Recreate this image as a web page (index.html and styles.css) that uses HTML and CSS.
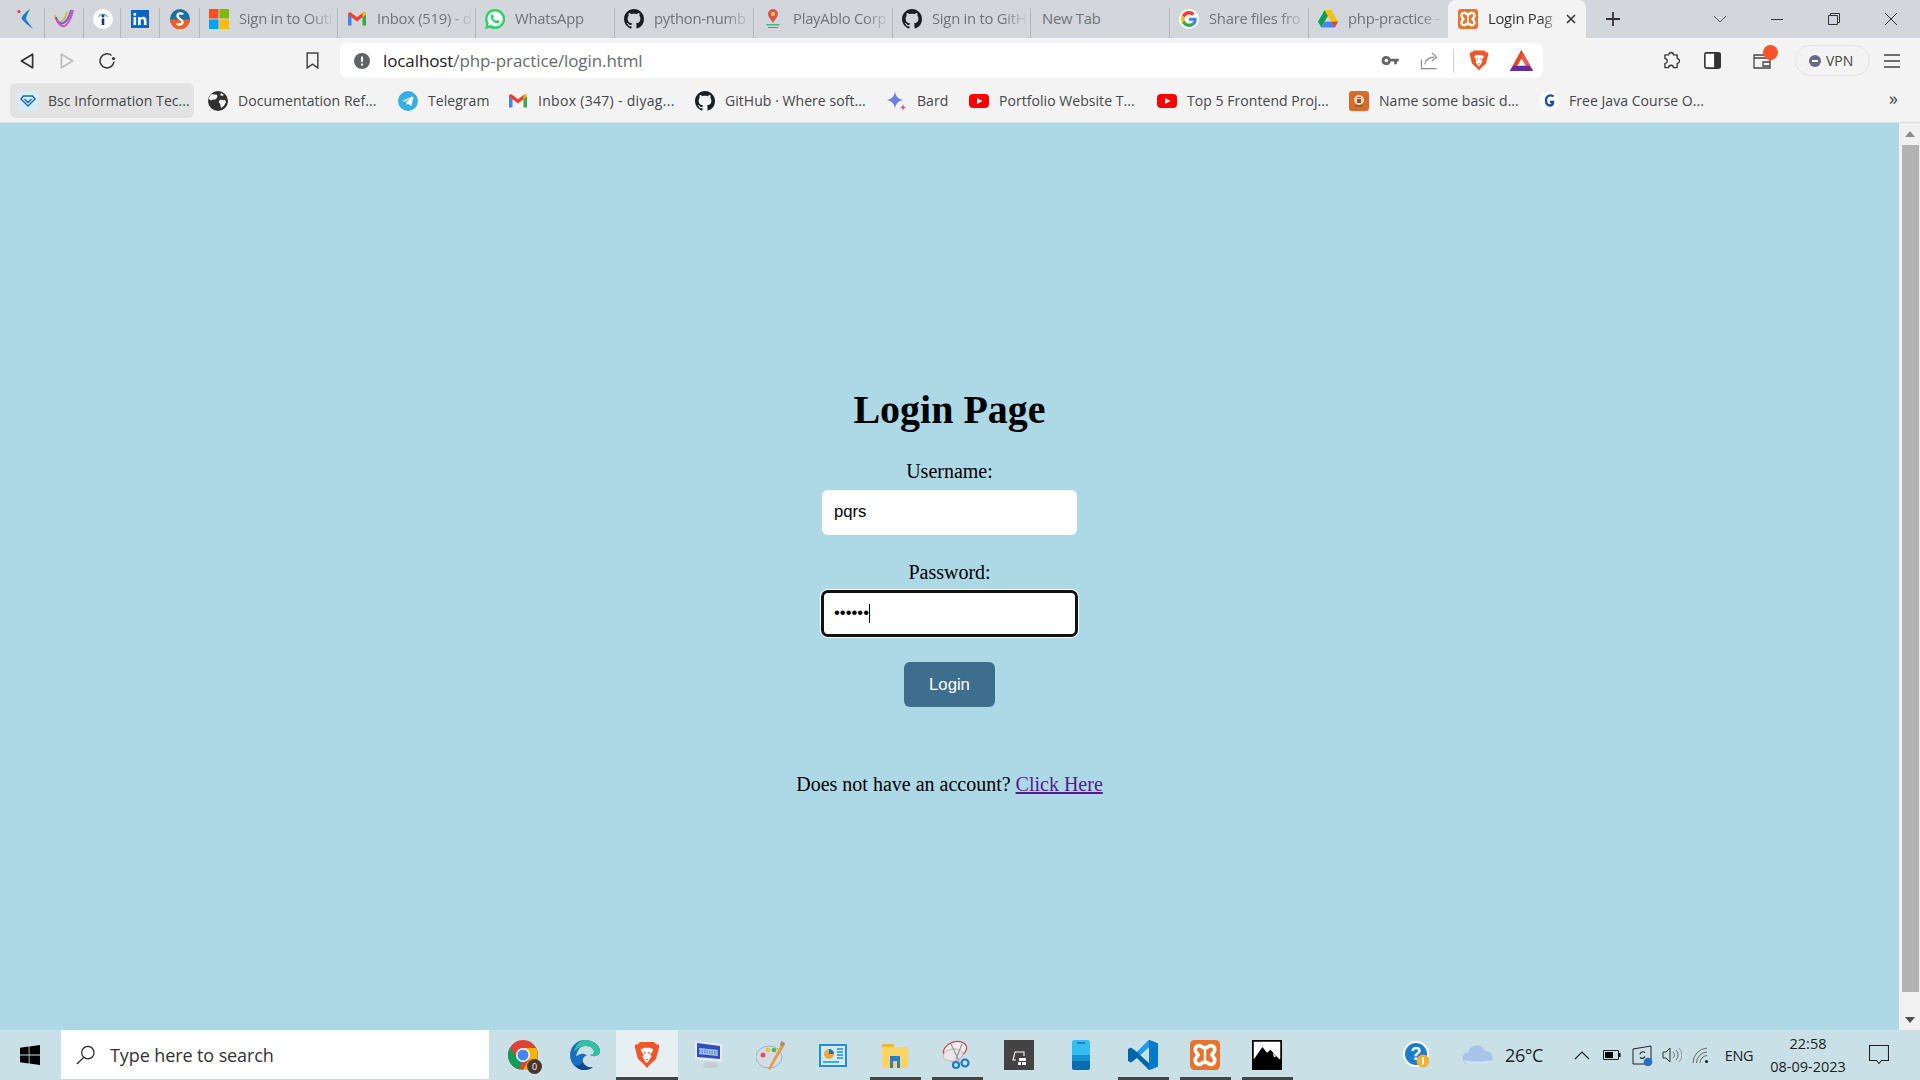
FILE: index.html
```html
<!DOCTYPE html>
<html lang="en">
<head>
  <meta charset="UTF-8">
  <title>Login Page</title>
  <meta name="viewport" content="width=device-width, initial-scale=1.0">
  <link rel="stylesheet" href="styles.css">
</head>
<body>

  <svg class="defs" width="0" height="0">
    <symbol id="gmail" viewBox="0 0 20 20">
      <path fill="#4285f4" d="M1 5v11.500h3.500V8z"/>
      <path fill="#34a853" d="M19 5v11.500h-3.500V8z"/>
      <path fill="#ea4335" d="M1 5.500C1 3.400 3 2.800 4.200 3.800L10 8.300l5.800-4.500C17 2.800 19 3.400 19 5.500L15.500 8.200 10 12.400 4.500 8.200z"/>
      <path fill="#fbbc04" d="M15.500 8.200V4.600l.3-.8C17 2.800 19 3.400 19 5.500z"/>
    </symbol>
    <symbol id="github" viewBox="0 0 16 16">
      <path fill="#1b1f23" d="M8 0C3.580 0 0 3.580 0 8c0 3.540 2.290 6.530 5.470 7.590.4.070.55-.17.55-.38 0-.19-.01-.82-.01-1.490-2.010.37-2.530-.49-2.690-.94-.09-.23-.48-.94-.82-1.130-.28-.15-.68-.52-.01-.53.63-.01 1.080.58 1.230.82.72 1.210 1.870.87 2.330.66.07-.52.28-.87.51-1.070-1.780-.2-3.640-.89-3.640-3.950 0-.87.31-1.590.82-2.150-.08-.2-.36-1.020.08-2.120 0 0 .67-.21 2.200.82.64-.18 1.320-.27 2-.27.68 0 1.360.09 2 .27 1.530-1.040 2.200-.82 2.200-.82.44 1.100.16 1.920.08 2.120.51.56.82 1.270.82 2.150 0 3.070-1.870 3.750-3.650 3.950.29.25.54.73.54 1.480 0 1.070-.01 1.930-.01 2.200 0 .21.15.46.55.38A8.013 8.013 0 0016 8c0-4.420-3.580-8-8-8z"/>
    </symbol>
    <symbol id="google" viewBox="0 0 48 48">
      <circle cx="24" cy="24" r="24" fill="#fff"/>
      <path fill="#ea4335" d="M24 13c3 0 5.600 1 7.700 3l5.700-5.700C33.900 7 29.400 5 24 5 16.600 5 10.200 9.200 7.100 15.400l6.700 5.200C15.300 16.100 19.300 13 24 13z"/>
      <path fill="#4285f4" d="M42.500 24.500c0-1.300-.1-2.600-.3-3.800H24v7.200h10.400c-.5 2.400-1.800 4.400-3.800 5.800l6.500 5c3.700-3.500 5.400-8.500 5.400-14.200z"/>
      <path fill="#fbbc05" d="M13.800 27.400c-.9-2.300-.9-4.500 0-6.800l-6.700-5.200c-2.800 5.700-2.800 11.500 0 17.200z"/>
      <path fill="#34a853" d="M24 43c5.400 0 9.700-1.700 13.100-5.300l-6.500-5c-1.700 1.200-3.900 2.300-6.600 2.300-4.700 0-8.700-3.100-10.200-7.600l-6.700 5.200C10.200 38.800 16.600 43 24 43z"/>
    </symbol>
    <symbol id="youtube" viewBox="0 0 20 20">
      <rect x="0" y="3" width="20" height="14" rx="4" fill="#f00"/>
      <path fill="#fff" d="M8 7l5.500 3L8 13z"/>
    </symbol>
    <symbol id="xampp" viewBox="0 0 20 20">
      <rect width="20" height="20" rx="3" fill="#e8732c"/>
      <path fill="none" stroke="#fff" stroke-width="2.400" d="M3.500 6.500C3.500 3.500 7 3 8.500 5h3C13 3 16.500 3.500 16.500 6.500c0 2-1.500 2.500-2 3.500.5 1 2 1.500 2 3.500 0 3-3.500 3.500-5 1.500h-3C7 17 3.500 16.500 3.500 13.500c0-2 1.500-2.500 2-3.500-.5-1-2-1.500-2-3.500z"/>
      <path stroke="#fff" stroke-width="1.600" d="M10 6v8"/>
    </symbol>
    <symbol id="brave" viewBox="0 0 20 22">
      <path fill="#f1562b" d="M4.500 1h11l1.500 1.800 2 .2.500 2-.7 2-1.800 7-4.500 4.200L10 21l-2.500-2.800L3 14 1.200 7 .5 5 1 3l2-.2z"/>
      <path fill="#fff" d="M5 6.500L8 5.500h4l3 1-1.200 2.500-1.300 1.500 1 1.500-1.500 2.300-1 1.700L10 17l-1-.5-1-1.700-1.500-2.300 1-1.500L6.200 9z"/>
      <path fill="#f1562b" d="M7.500 8.500l2 .8-1.200 1zM12.500 8.500l-2 .8 1.200 1zM8.800 14h2.400L10 15.200z"/>
    </symbol>
  </svg>

  <div class="tab-strip">
    <div class="tab pin-a">
      <svg class="ico" viewBox="0 0 20 20"><circle cx="4" cy="2.500" r="1.600" fill="#e8343c"/><path fill="#1f7fc4" d="M15 0C10 3.500 6.500 7 6.500 10 9 13 13 16 18 20 15 15 11.500 12 11 9.500 11.500 7 13 4 15 0z"/></svg>
    </div>
    <div class="tab pin-b">
      <svg class="ico" viewBox="0 0 20 20" fill="none" stroke-width="2"><path stroke="#e8b13c" d="M1 6c0 6 4 8 7 6 3-2 4-5 5-9"/><path stroke="#5c6bd6" d="M2 8c1 6 6 8 9 5 3-3 5-7 6-12"/><path stroke="#e04dbd" d="M3 11c2 6 7 8 10 4 3-4 5-9 6-14"/></svg>
    </div>
    <div class="tab pin-c">
      <svg class="ico" viewBox="0 0 20 20"><circle cx="10" cy="10" r="10" fill="#fff"/><circle cx="10" cy="7" r="1.500" fill="#143a78"/><path fill="#143a78" d="M8.700 9.500h2.600V16H8.700z"/><path fill="none" stroke="#2d7fd3" stroke-width="1" d="M5.500 8a5 5 0 019 0"/></svg>
    </div>
    <div class="tab pin-d">
      <svg class="ico" viewBox="0 0 20 20"><rect x="1" y="1" width="18" height="18" fill="#0a66c2"/><path fill="#fff" d="M3.500 8h2.600v8H3.500zM4.800 3.800a1.500 1.500 0 110 3 1.500 1.500 0 010-3zM8 8h2.500v1.200C11 8.400 12 7.800 13.200 7.800c2.500 0 3.300 1.500 3.300 3.800V16h-2.600v-4c0-1-.3-1.900-1.400-1.900s-1.800.8-1.800 2V16H8z"/></svg>
    </div>
    <div class="tab pin-e">
      <svg class="ico" viewBox="0 0 20 20"><circle cx="10" cy="10" r="10" fill="#1d6fa5"/><path fill="#e8632c" d="M0 10.500h20a10 10 0 01-20 0z"/><path fill="none" stroke="#fff" stroke-width="2.400" d="M13 5.500C12 3.800 7.500 3.800 7.500 7c0 3 5 3 5 6 0 3.200-4.500 3-5.500 1.300"/></svg>
    </div>

    <div class="tab wide-a">
      <svg class="ico" viewBox="0 0 20 20"><path fill="#f25022" d="M0 0h9.500v9.500H0z"/><path fill="#7fba00" d="M10.500 0H20v9.500h-9.500z"/><path fill="#00a4ef" d="M0 10.500h9.500V20H0z"/><path fill="#ffb900" d="M10.500 10.500H20V20h-9.500z"/></svg>
      <span class="tab-text">Sign in to Outl</span>
    </div>
    <div class="tab wide-a">
      <svg class="ico"><use href="#gmail"/></svg>
      <span class="tab-text">Inbox (519) - d</span>
    </div>
    <div class="tab wide-b">
      <svg class="ico" viewBox="0 0 20 20"><path fill="#25d366" d="M10 0a10 10 0 00-8.600 15L0 20l5.200-1.300A10 10 0 1010 0z"/><path fill="#fff" d="M10 2.500a7.500 7.500 0 00-6.300 11.500L3 16.800l2.900-.7A7.500 7.500 0 1010 2.500z"/><path fill="#25d366" d="M7 5.500c-.8.400-1.500 1.500-1.300 2.800.4 2.800 3.200 5.500 5.800 6 1.300.2 2.500-.5 2.900-1.400.2-.5.100-.9-.2-1.100l-1.700-.9c-.3-.1-.6 0-.8.300l-.6.700c-1.300-.4-2.600-1.700-3.100-3l.6-.7c.2-.2.200-.5.100-.8l-.7-1.700c-.2-.4-.6-.4-1-.2z"/></svg>
      <span class="tab-text">WhatsApp</span>
    </div>
    <div class="tab wide-b">
      <svg class="ico"><use href="#github"/></svg>
      <span class="tab-text">python-numb</span>
    </div>
    <div class="tab wide-b">
      <svg class="ico" viewBox="0 0 20 20"><path fill="#d9574a" d="M10 0a5 5 0 00-5 5c0 3 3 5.500 5 9 2-3.500 5-6 5-9a5 5 0 00-5-5z"/><circle cx="10" cy="5" r="2" fill="#e8d44c"/><path fill="#49b38a" d="M3 15h14l-1 1.500H4z"/><path fill="#d84d8a" d="M5 18h10v1H5z"/></svg>
      <span class="tab-text">PlayAblo Corp</span>
    </div>
    <div class="tab wide-a">
      <svg class="ico"><use href="#github"/></svg>
      <span class="tab-text">Sign in to GitH</span>
    </div>
    <div class="tab wide-b plain">
      <span class="tab-text">New Tab</span>
    </div>
    <div class="tab wide-b">
      <svg class="ico"><use href="#google"/></svg>
      <span class="tab-text">Share files fro</span>
    </div>
    <div class="tab wide-b no-line">
      <svg class="ico" viewBox="0 0 20 18"><path fill="#0f9d58" d="M6.700 0L0 11.700 3.300 17.500 10 5.800z"/><path fill="#ffc107" d="M6.700 0h6.600L20 11.700h-6.700z"/><path fill="#4285f4" d="M3.300 17.500L6.700 11.700H20l-3.300 5.800z"/><path fill="#ea4335" d="M13.300 11.700L16.700 17.500 20 11.700z"/></svg>
      <span class="tab-text">php-practice -</span>
    </div>
    <div class="tab active">
      <svg class="ico"><use href="#xampp"/></svg>
      <span class="tab-text">Login Pag</span>
      <svg class="tab-close" viewBox="0 0 10 10"><path d="M1 1l8 8M9 1l-8 8" stroke="#333" stroke-width="1.600"/></svg>
    </div>
    <svg class="new-tab" viewBox="0 0 14 14"><path d="M7 0v14M0 7h14" stroke="#333" stroke-width="1.800"/></svg>

    <div class="window-btns">
      <svg class="win-btn" viewBox="0 0 14 14" fill="none" stroke="#555"><path d="M1 4l6 6 6-6"/></svg>
      <svg class="win-btn" viewBox="0 0 14 14" fill="none" stroke="#333"><path d="M1 7.500h12"/></svg>
      <svg class="win-btn" viewBox="0 0 14 14" fill="none" stroke="#333"><path d="M1.500 3.500h9v9h-9zM3.500 3.500v-2h9v9h-2"/></svg>
      <svg class="win-btn" viewBox="0 0 14 14" fill="none" stroke="#333"><path d="M1 1l12 12M13 1L1 13"/></svg>
    </div>
  </div>

  <div class="toolbar">
    <div class="nav-btns">
      <svg class="nav-ico" viewBox="0 0 14 16" fill="none" stroke="#333" stroke-width="1.500"><path d="M12 2v12L2 8z" stroke-linejoin="round"/></svg>
      <svg class="nav-ico" viewBox="0 0 14 16" fill="none" stroke="#bcbcbc" stroke-width="1.500"><path d="M2 2v12l10-6z" stroke-linejoin="round"/></svg>
      <svg class="nav-ico reload" viewBox="0 0 18 18" fill="none" stroke="#333" stroke-width="1.500"><path d="M13.500 3.500A7 7 0 1016 9.500"/><circle cx="15.500" cy="6.500" r="1.600" fill="#333" stroke="none"/></svg>
    </div>
    <svg class="bookmark-ico" viewBox="0 0 12 16" fill="none" stroke="#444" stroke-width="1.400"><path d="M1 1h10v14l-5-3.500L1 15z"/></svg>
    <div class="omnibox">
      <svg class="info-ico" viewBox="0 0 16 16"><circle cx="8" cy="8" r="8" fill="#5f6368"/><path d="M7 3.500h2V9H7zM7 10.500h2v2H7z" fill="#fff"/></svg>
      <span class="url">localhost<span class="url-path">/php-practice/login.html</span></span>
      <div class="omni-icons">
        <svg class="key" viewBox="0 0 20 12"><path fill="#666" d="M5.500 1a5 5 0 014.700 3H19v3h-2v3h-3V7h-3.800A5 5 0 115.500 1zm0 3a2 2 0 100 4 2 2 0 000-4z"/></svg>
        <svg class="share" viewBox="0 0 20 20" fill="none" stroke="#8a8a8a" stroke-width="1.200"><path d="M1.500 9v9.500h16M5 14c1-5 5-7.500 10-7.500M12.500 2l5 4.500-5 4"/></svg>
        <span class="omni-line"></span>
        <svg class="brave-ico"><use href="#brave"/></svg>
        <svg class="bat" viewBox="0 0 22 20"><path fill="#662d91" d="M11 0L0 20h22z"/><path fill="#f15a4a" d="M11 0l11 20h-6L11 10z"/><path fill="#ff5000" d="M11 0L0 20h6l5-10z" opacity=".85"/><path fill="#fff" d="M11 8l-4.500 8h9z"/><path fill="#662d91" d="M0 20l3-5h16l3 5z"/></svg>
      </div>
    </div>
    <div class="tool-right">
      <svg class="puzzle" viewBox="0 0 18 20" fill="none" stroke="#333" stroke-width="1.400"><path d="M6 4a2.500 2.500 0 015 0h4v4a2.500 2.500 0 010 5v4.500h-4a2.500 2.500 0 00-5 0H2V13a2.500 2.500 0 000-5V4z" stroke-linejoin="round"/></svg>
      <svg class="sidebar-ico" viewBox="0 0 16 16"><rect x=".8" y=".8" width="14.400" height="14.400" rx="1.500" fill="#fff" stroke="#333" stroke-width="1.500"/><path fill="#333" d="M9.500 1h6v14h-6z"/></svg>
      <div class="wallet">
        <svg class="wallet-ico" viewBox="0 0 18 16" fill="none" stroke="#444" stroke-width="1.300"><path d="M1 2h16v13H1zM1 5h16M10 9h7v4h-7z"/></svg>
        <span class="red-dot"></span>
      </div>
      <div class="vpn"><span class="vpn-dot"></span>VPN</div>
      <svg class="menu-ico" viewBox="0 0 18 14" stroke="#444" stroke-width="1.500"><path d="M1 1h16M1 7h16M1 13h16"/></svg>
    </div>
  </div>

  <div class="bookmarks">
    <div class="bm hovered">
      <svg class="bm-ico" viewBox="0 0 20 20"><rect width="20" height="20" rx="2" fill="#d6ecf8"/><path fill="none" stroke="#1667b7" stroke-width="1.400" d="M3 8l2.500-3h9L17 8l-7 7zM6.500 8L10 11.500 13.500 8"/></svg>
      <span>Bsc Information Tec...</span>
    </div>
    <div class="bm">
      <svg class="bm-ico" viewBox="0 0 20 20"><circle cx="10" cy="10" r="10" fill="#303030"/><path fill="#f3f3f3" d="M4 3c2 1 4 0 5 1s0 3-1 4-3 0-4 1-2 0-3-1c0-2 1-4 3-5zM12 9c2-.5 3 .5 5 0l1 2c-1 3-3 5-5 6-1-1 0-3-1-4s-2-3 0-4zM13 2l3 2-2 1-2-1z"/></svg>
      <span>Documentation Ref...</span>
    </div>
    <div class="bm">
      <svg class="bm-ico" viewBox="0 0 20 20"><circle cx="10" cy="10" r="10" fill="#37aee2"/><path fill="#fff" d="M4 10l10.500-4.500c.6-.2 1 .1.900.8l-1.700 8c-.1.600-.6.700-1 .4l-2.700-2-1.400 1.300-.3-2.800 5-4.500-6.200 3.800z"/></svg>
      <span>Telegram</span>
    </div>
    <div class="bm inbox">
      <svg class="bm-ico"><use href="#gmail"/></svg>
      <span>Inbox (347) - diyag...</span>
    </div>
    <div class="bm">
      <svg class="bm-ico"><use href="#github"/></svg>
      <span>GitHub · Where soft...</span>
    </div>
    <div class="bm">
      <svg class="bm-ico" viewBox="0 0 20 20"><path fill="#6d7ee0" d="M8 0c.5 5 3 8 8 9-5 1-7.500 4-8 9-.5-5-3-8-8-9 5-1 7.500-4 8-9z"/><path fill="#d96570" d="M16 13c.3 2 1 3 3 3.500-2 .5-2.700 1.500-3 3.500-.3-2-1-3-3-3.500 2-.5 2.700-1.500 3-3.500z"/></svg>
      <span>Bard</span>
    </div>
    <div class="bm">
      <svg class="bm-ico"><use href="#youtube"/></svg>
      <span>Portfolio Website T...</span>
    </div>
    <div class="bm">
      <svg class="bm-ico"><use href="#youtube"/></svg>
      <span>Top 5 Frontend Proj...</span>
    </div>
    <div class="bm">
      <svg class="bm-ico" viewBox="0 0 20 20"><rect width="20" height="20" rx="3" fill="#d96b28"/><circle cx="10" cy="9" r="5" fill="#f0d9c0"/><path fill="#8a5a30" d="M8 6h4v1H8zM8 8h4v4H8zM6 14h8v1.500H6z"/></svg>
      <span>Name some basic d...</span>
    </div>
    <div class="bm">
      <svg class="bm-ico" viewBox="0 0 20 20"><circle cx="10" cy="10" r="10" fill="#fff"/><path fill="none" stroke="#1c4fa1" stroke-width="2.400" d="M14.500 5.500C13 4 9 3.500 7.500 7c-1.500 3 0 7.500 3.500 7.500 2 0 3-1.500 3-3.500h-3"/></svg>
      <span>Free Java Course O...</span>
    </div>
    <span class="bm-more">»</span>
  </div>

  <div class="viewport">
    <main class="page">
      <h1>Login Page</h1>
      <form class="login-form">
        <label class="field-label" for="username">Username:</label>
        <input class="field" type="text" id="username" value="pqrs">
        <label class="field-label second" for="password">Password:</label>
        <div class="field-wrap">
          <input class="field focused" type="password" id="password" value="pqrs12">
          <span class="caret"></span>
        </div>
        <button class="login-btn" type="button">Login</button>
      </form>
      <p class="signup">Does not have an account? <a href="#">Click Here</a></p>
    </main>
    <div class="scrollbar">
      <span class="arrow-up"></span>
      <div class="thumb"></div>
      <span class="arrow-down"></span>
    </div>
  </div>

  <div class="taskbar">
    <svg class="start" viewBox="0 0 20 20"><path fill="#000" d="M0 2.800l8.700-1.200v8H0zM9.500 1.500L20 0v9.600H9.500zM0 10.400h8.700v8L0 17.200zM9.500 10.400H20V20L9.500 18.500z"/></svg>
    <div class="search">
      <svg class="search-ico" viewBox="0 0 20 20" fill="none" stroke="#222" stroke-width="1.300"><circle cx="12.500" cy="7.500" r="6.500"/><path d="M8 12.500L1 19.500"/></svg>
      <span>Type here to search</span>
    </div>
    <div class="apps">
      <div class="app">
        <div class="chrome">
          <svg class="app-ico" viewBox="0 0 30 30"><circle cx="15" cy="15" r="15" fill="#db4437"/><path fill="#0f9d58" d="M2 7.500l7.500 11.500h5.500l-3.500 10.600A15 15 0 012 7.500z"/><path fill="#f4b400" d="M15 8h13a15 15 0 01-13 22l6.500-11z"/><circle cx="15" cy="15" r="7" fill="#fff"/><circle cx="15" cy="15" r="5.500" fill="#4285f4"/></svg>
          <span class="badge">0</span>
        </div>
      </div>
      <div class="app">
        <svg class="app-ico" viewBox="0 0 30 30"><path fill="#1a6fbf" d="M15 0a15 15 0 00-15 15c0 8 6 15 14 15 4 0 7-1 9-3-4 1-9-1-10-5-.8-3 1-6 4-6.500-3-3-8-2-11 1C8 8 11 6 16 6c5 0 8 3 8 6 0 2-2 3-4 2.500 2 3 10 2 10-3.500C30 5 23 0 15 0z"/><path fill="#35c1a0" d="M15 0C23 0 30 5 30 11c0 5.500-8 6.500-10 3.500 2 .5 4-.5 4-2.500 0-3-3-6-8-6-5 0-8 2-12 5.500C6 4 10 0 15 0z"/><path fill="#0c4a8a" d="M13 22c1 4 6 6 10 5-2 2-5 3-9 3-4 0-7-2-9-5 3 1 6 0 8-3z"/></svg>
      </div>
      <div class="app current">
        <svg class="app-ico brave-big"><use href="#brave"/></svg>
      </div>
      <div class="app">
        <svg class="app-ico" viewBox="0 0 30 30"><path fill="#c9ccd1" d="M11 22h11l3 4c-2 3-14 3-16 0z"/><path fill="#e8eaee" d="M1 1l27 3v18L1 19z"/><path fill="#2f4fc0" d="M3 3l23 3v13L3 17z"/><path fill="#a7c8ee" d="M5 8l19 2v6L5 14z"/><path stroke="#2f4fc0" stroke-width=".8" stroke-dasharray="1.500 1" d="M5 10l19 2M5 12l19 2"/></svg>
      </div>
      <div class="app">
        <svg class="app-ico" viewBox="0 0 30 30"><ellipse cx="13" cy="17" rx="13" ry="11" fill="#d3dde6" stroke="#9fb3c4"/><circle cx="7" cy="15" r="2.500" fill="#d85656"/><circle cx="12" cy="10" r="2.300" fill="#e9c23c"/><circle cx="18" cy="10" r="2.300" fill="#59b354"/><path fill="#e69a3a" d="M26 3l3 1.500L14 30l-2-1z"/><path fill="#b38a5a" d="M25 1l4 2-2 4-3-2z"/></svg>
      </div>
      <div class="app">
        <svg class="app-ico" viewBox="0 0 30 30"><rect x="1" y="4" width="28" height="23" fill="#1f8fd8"/><rect x="3" y="6" width="24" height="19" fill="#cfeaf8"/><circle cx="11" cy="14" r="5" fill="#f0a830"/><path fill="#1f6ec0" d="M11 14V9a5 5 0 015 5z"/><path stroke="#1f8fd8" stroke-width="1.500" d="M19 9h6M19 12h6M19 15h6M19 18h6M5 22h16"/></svg>
      </div>
      <div class="app running">
        <svg class="app-ico" viewBox="0 0 30 30"><path fill="#e8b93c" d="M2 4h12v4H2z"/><path fill="#fbd564" d="M2 7h26v21H2z"/><path fill="#2a7fc4" d="M10 16h10v12h-3v-7h-4v7h-3z"/></svg>
      </div>
      <div class="app running">
        <svg class="app-ico" viewBox="0 0 30 30" fill="none"><ellipse cx="13" cy="10" rx="12" ry="8" transform="rotate(-20 13 10)" fill="#f3f3f3" stroke="#d9474c" stroke-width="1.300"/><ellipse cx="11" cy="15" rx="10" ry="6" transform="rotate(-10 11 15)" fill="#e8e6ea" stroke="#c4b4bc"/><path stroke="#9b9b9b" stroke-width="1.300" d="M9 4l8 17M20 4l-6 15"/><circle cx="14" cy="25" r="3" stroke="#1f7ac4" stroke-width="2.200"/><circle cx="23" cy="23" r="3.500" stroke="#1f7ac4" stroke-width="2.200"/></svg>
      </div>
      <div class="app">
        <svg class="app-ico" viewBox="0 0 30 30"><rect width="30" height="30" fill="#444242"/><path fill="none" stroke="#fff" stroke-width="1.100" d="M12 20h-3l2-8h9v4"/><path fill="#fff" d="M15 18h7v3h-7zM14 22h3v3h-3zM18 22h4v3h-4z"/></svg>
      </div>
      <div class="app">
        <svg class="app-ico" viewBox="0 0 30 30"><rect x="6" width="18" height="30" rx="2.500" fill="#33bdf2"/><path fill="#1392d3" d="M6 15h18v6H6z"/><path fill="#0a6cb0" d="M6 21h18v6.500a2.500 2.500 0 01-2.500 2.500h-13A2.500 2.500 0 016 27.500z"/><path fill="#0d4f85" d="M11 2.500h8v1h-8z"/></svg>
      </div>
      <div class="app running">
        <svg class="app-ico" viewBox="0 0 30 30"><path fill="#0065a9" d="M21 0L9 12 3 7.500 0 9v12l3 1.500L9 18l12 12 9-3.500v-23z"/><path fill="#007acc" d="M21 0l9 3.500v23L21 30z"/><path fill="#c9e0e7" d="M21 7v16l-9-8z"/><path fill="#1f9cf0" d="M21 0L9 12l3 3 9-8z"/></svg>
      </div>
      <div class="app running">
        <svg class="app-ico"><use href="#xampp"/></svg>
      </div>
      <div class="app running">
        <svg class="app-ico" viewBox="0 0 26 26"><rect width="26" height="26" fill="#000"/><rect x="1.500" y="1.500" width="23" height="15" fill="#fff"/><path fill="#000" d="M1.500 17L9 6l4 5 3-2.500 8.500 9V22h-23z"/><path fill="#fff" d="M18 11l3 3-2 1z"/></svg>
      </div>
    </div>
    <div class="tray">
      <div class="tray-help">
        <svg viewBox="0 0 26 28" width="26" height="28"><circle cx="13" cy="13" r="13" fill="#fff"/><circle cx="13" cy="13" r="11" fill="#1d7dc8"/><text x="13" y="19" class="help-q">?</text><circle cx="20" cy="20" r="6.500" fill="#f2b134"/><path fill="#fff" d="M19 16.500h2v7h-2z"/></svg>
      </div>
      <svg class="cloud" viewBox="0 0 32 20"><path fill="#a9c4ea" d="M7 19a6 6 0 01-1-12 9 9 0 0117-1 6.500 6.500 0 012 13z"/><path fill="#d0e1f4" d="M2 15c7 2 20 2 29 0a6.500 6.500 0 01-6 4H7a6 6 0 01-5-4z"/></svg>
      <span class="temp">26°C</span>
      <div class="tray-cell first">
        <svg width="16" height="10" viewBox="0 0 16 10" fill="none" stroke="#222" stroke-width="1.200"><path d="M1 9l7-7 7 7"/></svg>
      </div>
      <div class="tray-cell">
        <svg width="18" height="12" viewBox="0 0 18 12"><path fill="none" stroke="#222" d="M.5 1.500h15v9H.5z"/><path fill="#000" d="M2 3h8v6H2zM16 4h1.500v4H16z"/></svg>
      </div>
      <div class="tray-cell">
        <svg width="21" height="21" viewBox="0 0 21 21" fill="none"><path stroke="#222" d="M1 4l18-3v18H1z"/><path stroke="#222" stroke-width="1.200" d="M13 7.500c-2-1.500-5-.5-5 2M8 12.500c1.500 1.500 4 1 5-1"/><circle cx="16" cy="17" r="4.300" fill="#2a6fc4"/></svg>
      </div>
      <div class="tray-cell">
        <svg width="20" height="18" viewBox="0 0 20 18" fill="none" stroke="#333"><path d="M1 6h3l4-4v14l-4-4H1z"/><path stroke="#555" d="M11 6a4 4 0 010 6M14 4a7 7 0 010 10" opacity=".8"/><path stroke="#999" d="M17 2a10 10 0 010 14"/></svg>
      </div>
      <div class="tray-cell wifi">
        <svg width="18" height="18" viewBox="0 0 18 18" fill="none" stroke="#666"><path d="M1 17A15 15 0 0115 2M4.500 17A11 11 0 0115 6M8 17a7.500 7.500 0 017-7.500"/><circle cx="14.500" cy="15.500" r="1.600" fill="#222" stroke="none"/></svg>
      </div>
      <div class="tray-cell eng">ENG</div>
      <div class="tray-cell clock"><span>22:58</span><span>08-09-2023</span></div>
      <div class="tray-cell notif">
        <svg width="20" height="20" viewBox="0 0 20 20" fill="none" stroke="#222" stroke-width="1.100"><path d="M.5.500h19v15h-7L10 18.500 7.500 15.500h-7z"/></svg>
      </div>
    </div>
  </div>

</body>
</html>
```

FILE: styles.css
```css
* {
  box-sizing: border-box;
}

html, body {
  margin: 0;
  height: 100%;
  overflow: hidden;
}

body {
  display: flex;
  flex-direction: column;
  width: 1920px;
  height: 1080px;
  font-family: "Open Sans", "Noto Sans", sans-serif;
  background: #add8e6;
}

.defs {
  display: block;
  height: 0;
}

svg {
  display: block;
  flex: none;
}

/* tabs */
.tab-strip {
  display: flex;
  height: 38px;
  background: #d3d6da;
}

.tab {
  display: flex;
  align-items: center;
  height: 30px;
  margin-top: 8px;
  padding: 0 0 8px 9px;
  border-right: 1px solid #b4b7bb;
  font-size: 14.8px;
  color: #717376;
  overflow: hidden;
  white-space: nowrap;
}

.ico {
  width: 20px;
  height: 20px;
}

.pin-a { width: 45px; padding-left: 15px; }
.pin-b { width: 39px; padding-left: 9px; }
.pin-c { width: 37px; padding-left: 9px; }
.pin-d { width: 39px; padding-left: 9px; }
.pin-e { width: 40px; padding-left: 10px; }
.wide-a { width: 138px; }
.wide-b { width: 139px; }
.plain { padding-left: 11px; }
.no-line { border-right: none; }

.tab-text {
  display: block;
  flex: 1;
  min-width: 0;
  margin-left: 10px;
  padding-bottom: 2px;
  letter-spacing: -0.25px;
  -webkit-mask-image: linear-gradient(to right, #000 72%, transparent 98%);
  mask-image: linear-gradient(to right, #000 72%, transparent 98%);
}

.plain .tab-text {
  margin-left: 0;
  -webkit-mask-image: none;
  mask-image: none;
}

.active {
  width: 138px;
  height: 38px;
  margin-top: 0;
  padding: 0 10px;
  border: none;
  border-radius: 8px 8px 0 0;
  background: #f3f3f3;
  color: #333;
}

.tab-close {
  width: 10px;
  height: 10px;
  margin-left: 4px;
}

.new-tab {
  width: 14px;
  height: 14px;
  margin: 12px 0 0 20px;
}

.window-btns {
  display: flex;
  margin-left: auto;
  padding: 0 22px 0 91px;
  gap: 43px;
  align-items: center;
}

.win-btn {
  width: 14px;
  height: 14px;
}

/* address bar */
.toolbar {
  display: flex;
  align-items: center;
  height: 45px;
  background: #f3f3f3;
}

.nav-btns {
  display: flex;
  align-items: center;
  gap: 24px;
  padding-left: 19px;
}

.nav-ico {
  width: 16px;
  height: 18px;
}

.reload {
  width: 18px;
  margin-left: -1px;
}

.bookmark-ico {
  width: 13px;
  height: 17px;
  margin-left: 190px;
}

.omnibox {
  display: flex;
  align-items: center;
  width: 1203px;
  height: 35px;
  margin-left: 21px;
  padding: 0 10px 0 14px;
  border-radius: 8px;
  background: #fff;
}

.info-ico {
  width: 16px;
  height: 16px;
}

.url {
  margin-left: 13px;
  font-size: 17px;
  letter-spacing: -0.1px;
  color: #222;
}

.url-path {
  color: #686b6f;
}

.omni-icons {
  display: flex;
  align-items: center;
  margin-left: auto;
}

.key {
  width: 19px;
  height: 11px;
}

.share {
  width: 19px;
  height: 19px;
  margin-left: 20px;
}

.omni-line {
  width: 1px;
  height: 24px;
  margin-left: 14px;
  background: #cfcfcf;
}

.brave-ico {
  width: 20px;
  height: 23px;
  margin-left: 15px;
}

.bat {
  width: 23px;
  height: 21px;
  margin-left: 21px;
}

.tool-right {
  display: flex;
  align-items: center;
  padding-left: 120px;
}

.puzzle {
  width: 17px;
  height: 19px;
}

.sidebar-ico {
  width: 17px;
  height: 17px;
  margin-left: 24px;
}

.wallet {
  position: relative;
  margin-left: 32px;
}

.wallet-ico {
  width: 18px;
  height: 16px;
}

.red-dot {
  position: absolute;
  top: -8px;
  left: 10px;
  width: 15px;
  height: 15px;
  border-radius: 50%;
  background: #fb542b;
}

.vpn {
  display: flex;
  align-items: center;
  gap: 5px;
  width: 75px;
  height: 31px;
  margin-left: 24px;
  padding-left: 13px;
  border: 1px solid #e3e3e3;
  border-radius: 16px;
  font-size: 14px;
  color: #444;
}

.vpn-dot {
  width: 12px;
  height: 12px;
  border-radius: 50%;
  background: linear-gradient(#fff, #fff) center / 6px 2px no-repeat #666a85;
}

.menu-ico {
  width: 18px;
  height: 14px;
  margin-left: 13px;
}

/* bookmarks */
.bookmarks {
  display: grid;
  grid-template-columns: 184px 184px 104px 181px 186px 76px 182px 186px 184px 178px;
  column-gap: 6px;
  align-items: center;
  position: relative;
  height: 40px;
  padding: 0 0 5px 10px;
  background: #f3f3f3;
  border-bottom: 1px solid #d8dee1;
}

.bm {
  display: flex;
  align-items: center;
  height: 35px;
  padding-left: 8px;
  border-radius: 6px;
  font-size: 14px;
  letter-spacing: 0.05px;
  color: #454649;
  white-space: nowrap;
  overflow: hidden;
}

.bm span {
  margin-left: 10px;
}

.inbox span {
  letter-spacing: 0.3px;
}

.hovered {
  background: #e3e3e3;
}

.bm-ico {
  width: 20px;
  height: 20px;
}

.bm-more {
  position: absolute;
  top: 4px;
  right: 22px;
  font-size: 18px;
  line-height: 22px;
  color: #444;
}

/* page */
.viewport {
  display: flex;
  flex: 1;
  min-height: 0;
}

.page {
  flex: 1;
  display: flex;
  flex-direction: column;
  align-items: center;
  padding-top: 264px;
  background: #add8e6;
  font-family: "Liberation Serif", "Times New Roman", serif;
  font-size: 20px;
  color: #000;
}

h1 {
  margin: 0 0 27px;
  font-size: 40px;
  line-height: 46px;
  font-weight: bold;
}

.login-form {
  display: flex;
  flex-direction: column;
  align-items: center;
}

.field-label {
  line-height: 23px;
  margin-bottom: 7px;
}

.second {
  margin-top: 26px;
}

.field-wrap {
  position: relative;
}

.field {
  display: block;
  width: 255px;
  height: 45px;
  padding: 0 12px 1px;
  border: none;
  border-radius: 6px;
  background: #fff;
  font-family: "Liberation Sans", Arial, sans-serif;
  font-size: 16.67px;
  color: #000;
}

.focused {
  outline: 3px solid #111;
  outline-offset: -2px;
  box-shadow: 0 0 0 2px #fff;
}

.caret {
  position: absolute;
  top: 13px;
  left: 47px;
  width: 1px;
  height: 19px;
  background: #000;
}

.login-btn {
  width: 91px;
  height: 45px;
  margin-top: 26px;
  border: none;
  border-radius: 6px;
  background: #3e6e8e;
  color: #fff;
  font-family: "Liberation Sans", Arial, sans-serif;
  font-size: 16.67px;
}

.signup {
  margin: 66px 0 0;
  line-height: 23px;
}

.signup a {
  color: #551a8b;
}

.scrollbar {
  display: flex;
  flex-direction: column;
  align-items: center;
  width: 21px;
  padding-left: 1px;
  background: #f1f1f1;
}

.arrow-up,
.arrow-down {
  width: 0;
  height: 0;
  border-left: 5px solid transparent;
  border-right: 5px solid transparent;
}

.arrow-up {
  margin-top: 8px;
  border-bottom: 6px solid #8c8c8c;
}

.arrow-down {
  margin-bottom: 7px;
  border-top: 6px solid #505050;
}

.thumb {
  width: 17px;
  height: 847px;
  margin: 8px 0 auto;
  background: #b3b3b3;
}

/* taskbar */
.taskbar {
  display: flex;
  align-items: center;
  height: 50px;
  background: #c9e0e7;
}

.start {
  width: 20px;
  height: 20px;
  margin-left: 20px;
}

.search {
  display: flex;
  flex: none;
  align-items: center;
  width: 428px;
  height: 50px;
  margin-left: 21px;
  padding-left: 15px;
  background: #fff;
  border-bottom: 1px solid #cfd6da;
  font-size: 18px;
  letter-spacing: -0.1px;
  color: #333;
}

.search-ico {
  width: 19px;
  height: 20px;
}

.search span {
  margin-left: 15px;
}

.apps {
  display: flex;
  flex: none;
  margin-left: 3px;
}

.app {
  display: flex;
  flex: none;
  align-items: center;
  justify-content: center;
  width: 62px;
  height: 50px;
}

.app-ico {
  width: 30px;
  height: 30px;
}

.brave-big {
  width: 26px;
  height: 30px;
}

.running {
  background: linear-gradient(#444, #444) center bottom / 51px 3px no-repeat;
}

.current {
  background: linear-gradient(#444, #444) center bottom / 100% 3px no-repeat #e6f0f3;
}

.chrome {
  position: relative;
}

.badge {
  position: absolute;
  right: -4px;
  bottom: -4px;
  width: 15px;
  height: 15px;
  border-radius: 50%;
  background: #4a352c;
  font-size: 9px;
  line-height: 15px;
  text-align: center;
  color: #fff;
}

.tray {
  display: flex;
  flex: none;
  align-items: center;
  margin-left: 95px;
  font-size: 14px;
  color: #222;
}

.tray-help {
  display: flex;
  justify-content: center;
  width: 46px;
}

.help-q {
  font: bold 18px "Liberation Sans", sans-serif;
  fill: #fff;
  text-anchor: middle;
}

.cloud {
  width: 32px;
  height: 20px;
  margin-left: 23px;
}

.temp {
  margin-left: 11px;
  font-size: 18px;
  letter-spacing: -0.4px;
}

.tray-cell {
  display: flex;
  flex: none;
  align-items: center;
  justify-content: center;
  width: 30px;
}

.first {
  margin-left: 24px;
}

.wifi {
  width: 34px;
  padding-right: 6px;
}

.eng {
  width: 36px;
  font-size: 14.5px;
  letter-spacing: -0.3px;
}

.clock {
  flex-direction: column;
  width: 102px;
  font-size: 14.5px;
  line-height: 23px;
}

.notif {
  width: 40px;
}
```
